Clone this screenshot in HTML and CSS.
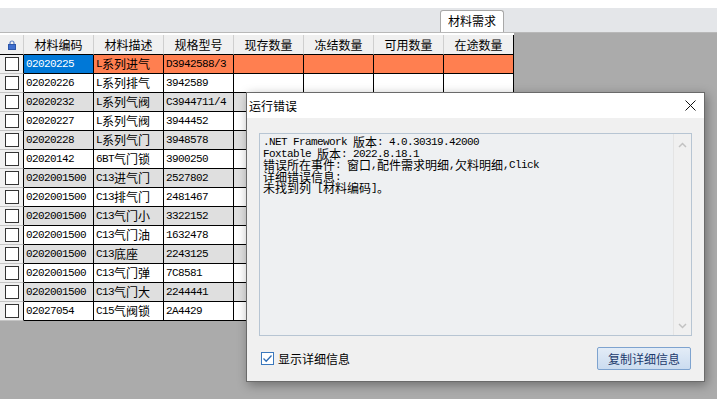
FILE: index.html
```html
<!DOCTYPE html>
<html lang="zh-CN">
<head>
  <meta charset="UTF-8" />
  <title>材料需求</title>
  <link rel="stylesheet" href="styles.css">
</head>
<body>
  <div class="topline"></div>
  <div class="tabstrip">
    <div class="tab">材料需求</div>
  </div>

  <div class="workspace">
    <div class="grid">
      <div class="row head">
        <div class="c sel-col">
          <svg width="8" height="10" viewBox="0 0 8 10"><path d="M2 4.5V3a2 2 0 0 1 4 0v1.5" fill="none" stroke="#5b7fc4" stroke-width="1.2"/><rect x="0.5" y="4.5" width="7" height="5" fill="#3f6fcf" stroke="#2c55a8" stroke-width="1"/></svg>
        </div>
        <div class="c">材料编码</div>
        <div class="c">材料描述</div>
        <div class="c">规格型号</div>
        <div class="c">现存数量</div>
        <div class="c">冻结数量</div>
        <div class="c">可用数量</div>
        <div class="c">在途数量</div>
      </div>

      <div class="row hot">
        <div class="c sel-col"><span class="box"></span></div>
        <div class="c cur">02020225</div>
        <div class="c">L<span class="cj">系列进气</span></div>
        <div class="c">D3942588/3</div>
        <div class="c"></div><div class="c"></div><div class="c"></div><div class="c"></div>
      </div>
      <div class="row">
        <div class="c sel-col"><span class="box"></span></div>
        <div class="c">02020226</div>
        <div class="c">L<span class="cj">系列排气</span></div>
        <div class="c">3942589</div>
        <div class="c"></div><div class="c"></div><div class="c"></div><div class="c"></div>
      </div>
      <div class="row alt">
        <div class="c sel-col"><span class="box"></span></div>
        <div class="c">02020232</div>
        <div class="c">L<span class="cj">系列气阀</span></div>
        <div class="c">C3944711/4</div>
        <div class="c"></div><div class="c"></div><div class="c"></div><div class="c"></div>
      </div>
      <div class="row">
        <div class="c sel-col"><span class="box"></span></div>
        <div class="c">02020227</div>
        <div class="c">L<span class="cj">系列气阀</span></div>
        <div class="c">3944452</div>
        <div class="c"></div><div class="c"></div><div class="c"></div><div class="c"></div>
      </div>
      <div class="row alt">
        <div class="c sel-col"><span class="box"></span></div>
        <div class="c">02020228</div>
        <div class="c">L<span class="cj">系列气门</span></div>
        <div class="c">3948578</div>
        <div class="c"></div><div class="c"></div><div class="c"></div><div class="c"></div>
      </div>
      <div class="row">
        <div class="c sel-col"><span class="box"></span></div>
        <div class="c">02020142</div>
        <div class="c">6BT<span class="cj">气门锁</span></div>
        <div class="c">3900250</div>
        <div class="c"></div><div class="c"></div><div class="c"></div><div class="c"></div>
      </div>
      <div class="row alt">
        <div class="c sel-col"><span class="box"></span></div>
        <div class="c">0202001500</div>
        <div class="c">C13<span class="cj">进气门</span></div>
        <div class="c">2527802</div>
        <div class="c"></div><div class="c"></div><div class="c"></div><div class="c"></div>
      </div>
      <div class="row">
        <div class="c sel-col"><span class="box"></span></div>
        <div class="c">0202001500</div>
        <div class="c">C13<span class="cj">排气门</span></div>
        <div class="c">2481467</div>
        <div class="c"></div><div class="c"></div><div class="c"></div><div class="c"></div>
      </div>
      <div class="row alt">
        <div class="c sel-col"><span class="box"></span></div>
        <div class="c">0202001500</div>
        <div class="c">C13<span class="cj">气门小</span></div>
        <div class="c">3322152</div>
        <div class="c"></div><div class="c"></div><div class="c"></div><div class="c"></div>
      </div>
      <div class="row">
        <div class="c sel-col"><span class="box"></span></div>
        <div class="c">0202001500</div>
        <div class="c">C13<span class="cj">气门油</span></div>
        <div class="c">1632478</div>
        <div class="c"></div><div class="c"></div><div class="c"></div><div class="c"></div>
      </div>
      <div class="row alt">
        <div class="c sel-col"><span class="box"></span></div>
        <div class="c">0202001500</div>
        <div class="c">C13<span class="cj">底座</span></div>
        <div class="c">2243125</div>
        <div class="c"></div><div class="c"></div><div class="c"></div><div class="c"></div>
      </div>
      <div class="row">
        <div class="c sel-col"><span class="box"></span></div>
        <div class="c">0202001500</div>
        <div class="c">C13<span class="cj">气门弹</span></div>
        <div class="c">7C8581</div>
        <div class="c"></div><div class="c"></div><div class="c"></div><div class="c"></div>
      </div>
      <div class="row alt">
        <div class="c sel-col"><span class="box"></span></div>
        <div class="c">0202001500</div>
        <div class="c">C13<span class="cj">气门大</span></div>
        <div class="c">2244441</div>
        <div class="c"></div><div class="c"></div><div class="c"></div><div class="c"></div>
      </div>
      <div class="row">
        <div class="c sel-col"><span class="box"></span></div>
        <div class="c">02027054</div>
        <div class="c">C15<span class="cj">气阀锁</span></div>
        <div class="c">2A4429</div>
        <div class="c"></div><div class="c"></div><div class="c"></div><div class="c"></div>
      </div>
    </div>
  </div>

  <!-- error dialog floating over the grid -->
  <div class="dialog">
    <div class="dlg-title">
      <span>运行错误</span>
      <svg class="close" width="11" height="11" viewBox="0 0 11 11"><path d="M0.5 0.5L10.5 10.5M10.5 0.5L0.5 10.5" stroke="#111" stroke-width="1"/></svg>
    </div>
    <div class="dlg-body">
      <div class="msgbox">
        <div class="msg">
          <div class="ln">.NET Framework <span class="cj">版本</span>: 4.0.30319.42000</div>
          <div class="ln">Foxtable <span class="cj">版本</span>: 2022.8.18.1</div>
          <div class="ln"><span class="cj">错误所在事件</span>: <span class="cj">窗口</span>,<span class="cj">配件需求明细</span>,<span class="cj">欠料明细</span>,Click</div>
          <div class="ln"><span class="cj">详细错误信息</span>:</div>
          <div class="ln"><span class="cj">未找到列</span> [<span class="cj">材料编码</span>]<span class="cj">。</span></div>
        </div>
        <div class="vscroll">
          <svg width="9" height="6" viewBox="0 0 9 6"><path d="M1 5L4.5 1.5L8 5" fill="none" stroke="#c2c2c2" stroke-width="1.5"/></svg>
          <svg width="9" height="6" viewBox="0 0 9 6"><path d="M1 1L4.5 4.5L8 1" fill="none" stroke="#c2c2c2" stroke-width="1.5"/></svg>
        </div>
      </div>
      <div class="dlg-foot">
        <label class="chk">
          <span class="chkbox">
            <svg width="11" height="11" viewBox="0 0 11 11"><path d="M1.5 5.5L4.2 8.2L9.5 2.5" fill="none" stroke="#2f6db5" stroke-width="1.3"/></svg>
          </span>
          显示详细信息
        </label>
        <button class="btn">复制详细信息</button>
      </div>
    </div>
  </div>
</body>
</html>
```

FILE: styles.css
```css
body {
  margin: 0;
  width: 717px;
  height: 399px;
  overflow: hidden;
  position: relative;
  display: flex;
  flex-direction: column;
  font-family: "Noto Sans CJK SC", sans-serif;
  font-size: 12px;
  color: #000;
  background: #ababab;
}
.topline {
  height: 8px;
  background: #fff;
}
.tabstrip {
  height: 24px;
  background: #e4e6e9;
  border-bottom: 1px solid #b8b8b8;
  display: flex;
  align-items: flex-end;
  padding-left: 440px;
}
.tab {
  width: 64px;
  height: 22px;
  box-sizing: border-box;
  background: #fff;
  border: 1px solid #a8a8a8;
  border-bottom: none;
  border-radius: 3px 3px 0 0;
  text-align: center;
  line-height: 20px;
  font-size: 12px;
}
.workspace {
  flex: 1;
}
.grid {
  width: 514px;
  padding-top: 2px;
  background: #fff;
}
.row {
  display: grid;
  grid-template-columns: 24px repeat(7, 70px);
  height: 19px;
  background: #fff;
}
.row.alt {
  background: #dfdfdf;
}
.row.hot {
  background: #ff7f50;
}
.c {
  box-sizing: border-box;
  border-right: 1px solid #000;
  border-bottom: 1px solid #000;
  padding-left: 2px;
  font-family: "Liberation Mono", "Noto Sans CJK SC", monospace;
  font-size: 11px;
  letter-spacing: -0.6px;
  line-height: 18px;
  white-space: nowrap;
  overflow: hidden;
}
.cj {
  font-family: "Noto Sans CJK SC", sans-serif;
  font-size: 12px;
  letter-spacing: 0;
  vertical-align: top;
}
.c.cur {
  background: #0078d7;
  color: #fff;
}
.row.head {
  height: 20px;
  background: #f0f0f0;
}
.row.head .c {
  font-family: "Noto Sans CJK SC", sans-serif;
  font-size: 12px;
  letter-spacing: 0;
  text-align: center;
  padding-left: 0;
  line-height: 19px;
  border-right-color: #cfcfcf;
  border-bottom: 1px solid #000;
}
.row.head .c:last-child {
  border-right-color: #000;
}
.c.sel-col {
  background: #f0f0f0;
  border-bottom-color: #c4c4c4;
  border-right-color: #000;
  padding-left: 0;
  display: flex;
  align-items: center;
  justify-content: center;
}
.row.head .c.sel-col {
  border-right-color: #cfcfcf;
}
.box {
  width: 14px;
  height: 14px;
  box-sizing: border-box;
  background: #fff;
  border: 1px solid #333;
}

.dialog {
  position: absolute;
  left: 246px;
  top: 92px;
  width: 459px;
  height: 290px;
  box-sizing: border-box;
  background: #f0f0f0;
  border: 1px solid #6a6a6a;
  box-shadow: 2px 3px 10px rgba(0, 0, 0, 0.35);
}
.dlg-title {
  height: 25px;
  background: #fff;
  display: flex;
  align-items: center;
  justify-content: space-between;
  padding: 0 8px 0 2px;
  font-size: 12px;
}
.dlg-body {
  padding: 15px 12px 0 12px;
}
.msgbox {
  height: 203px;
  box-sizing: border-box;
  border: 1px solid #b7c5d3;
  background: #eef0f2;
  display: flex;
}
.msg {
  flex: 1;
  padding: 2px 0 0 3px;
  font-family: "Liberation Mono", "Noto Sans CJK SC", monospace;
  font-size: 11px;
  letter-spacing: -0.6px;
  line-height: 12px;
  white-space: nowrap;
}
.msg .ln {
  height: 11.5px;
}
.vscroll {
  width: 17px;
  border-left: 1px solid #e4e4e4;
  background: #f0f0f0;
  display: flex;
  flex-direction: column;
  justify-content: space-between;
  align-items: center;
  padding: 8px 0 6px;
}
.dlg-foot {
  display: flex;
  justify-content: space-between;
  align-items: center;
  margin-top: 11px;
  padding-right: 1px;
}
.chk {
  display: flex;
  align-items: center;
  gap: 4px;
  padding-left: 2px;
  font-size: 12px;
}
.chkbox {
  width: 13px;
  height: 13px;
  box-sizing: border-box;
  border: 1px solid #3a78bd;
  background: #fff;
  display: flex;
  align-items: center;
  justify-content: center;
}
.btn {
  width: 94px;
  height: 23px;
  border: 1px solid #7ea3cf;
  border-radius: 2px;
  background: linear-gradient(#e3ecf7, #cbdcf0);
  color: #1c3a6c;
  font-family: "Noto Sans CJK SC", sans-serif;
  font-size: 12px;
  padding: 0;
}
```
